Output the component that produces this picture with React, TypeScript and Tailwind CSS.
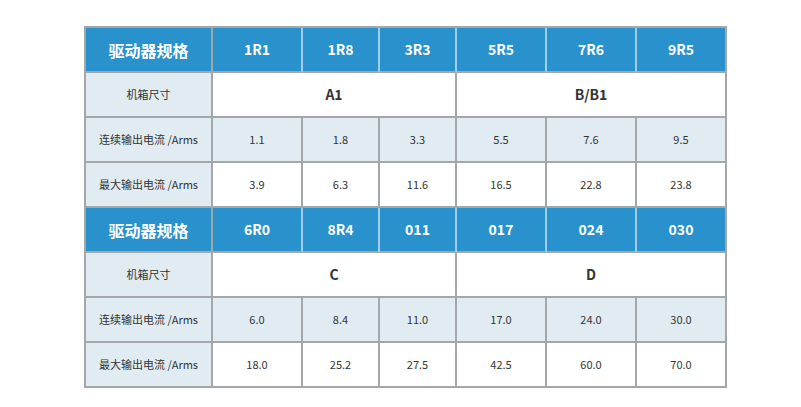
import React from 'react'

const font = { fontFamily: '"Noto Sans CJK SC", "Noto Sans", sans-serif' }

type Block = {
    models: string[]
    sizes: [string, string]
    cont: string[]
    peak: string[]
}

const blocks: Block[] = [
    {
        models: ['1R1', '1R8', '3R3', '5R5', '7R6', '9R5'],
        sizes: ['A1', 'B/B1'],
        cont: ['1.1', '1.8', '3.3', '5.5', '7.6', '9.5'],
        peak: ['3.9', '6.3', '11.6', '16.5', '22.8', '23.8'],
    },
    {
        models: ['6R0', '8R4', '011', '017', '024', '030'],
        sizes: ['C', 'D'],
        cont: ['6.0', '8.4', '11.0', '17.0', '24.0', '30.0'],
        peak: ['18.0', '25.2', '27.5', '42.5', '60.0', '70.0'],
    },
]

const cell = 'flex items-center justify-center border-r-2 border-b-2 border-[#a4a7aa]'
const label = `${cell} bg-[#e1ecf2] text-[11px] text-[#333]`

function SpecBlock({ b }: { b: Block }) {
    return (
        <>
            <div className={`${cell} bg-[#2991cb] text-white text-[16px] font-semibold`}>驱动器规格</div>
            {b.models.map((m, i) => (
                <div
                    key={m}
                    className={`flex items-center justify-center border-b-2 border-b-[#a4a7aa] border-r-2 bg-[#2991cb] text-white text-[14px] font-bold ${i === 5 ? 'border-r-[#a4a7aa]' : 'border-r-[#9fcdec]'}`}
                >
                    {m}
                </div>
            ))}

            <div className={label}>机箱尺寸</div>
            <div className={`${cell} col-span-3 bg-white text-[14px] font-bold text-[#333]`}>{b.sizes[0]}</div>
            <div className={`${cell} col-span-3 bg-white text-[14px] font-bold text-[#333]`}>{b.sizes[1]}</div>

            <div className={label}>连续输出电流 /Arms</div>
            {b.cont.map((v, i) => (
                <div key={i} className={`${cell} bg-[#e1ecf2] text-[11px] text-[#333]`}>{v}</div>
            ))}

            <div className={label}>最大输出电流 /Arms</div>
            {b.peak.map((v, i) => (
                <div key={i} className={`${cell} bg-white text-[11px] text-[#333]`}>{v}</div>
            ))}
        </>
    )
}

export default function App() {
    return (
        <div className="w-[801px] h-[407px] bg-white pt-[26px] pl-[84px]" style={font}>
            <div className="grid w-fit grid-cols-[127px_90px_77px_77px_90px_90px_90px] auto-rows-[45px] border-l-2 border-t-2 border-[#a4a7aa]">
                {blocks.map((b, i) => (
                    <SpecBlock key={i} b={b} />
                ))}
            </div>
        </div>
    )
}
